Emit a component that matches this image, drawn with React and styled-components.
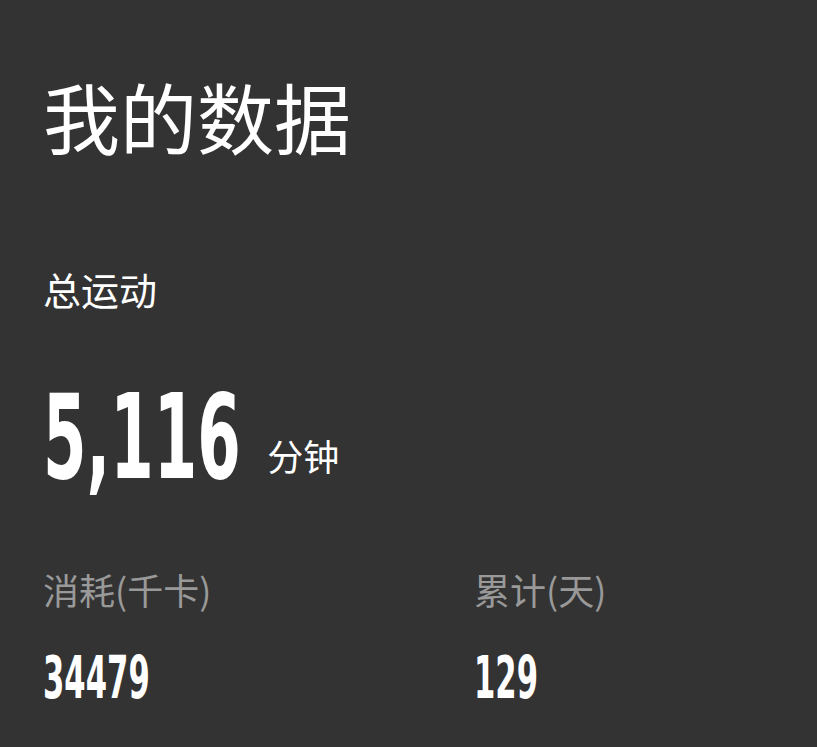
import styled, { createGlobalStyle } from "styled-components";

const GlobalStyle = createGlobalStyle`
    html, body {
        margin: 0;
        padding: 0;
        background: #333333;
    }
    body {
        font-family: "Noto Sans CJK SC", "Noto Sans", sans-serif;
        color: #ffffff;
    }
`;

const Page = styled.div`
    width: 817px;
    height: 747px;
    box-sizing: border-box;
    padding: 77px 44px 0 43px;
    display: flex;
    flex-direction: column;
    background: #333333;
    overflow: hidden;
`;

const Title = styled.h1`
    margin: 0;
    font-size: 77px;
    font-weight: 400;
    line-height: 1;
`;

const Label = styled.div`
    margin-top: ${(p) => p.$top || 0}px;
    font-size: ${(p) => p.$size || 36}px;
    line-height: 1;
    color: ${(p) => p.$color || "#ffffff"};
`;

const BigRow = styled.div`
    display: flex;
    align-items: baseline;
    margin-top: 70px;
`;

// no condensed face installed, so squeeze the bold digits horizontally
const Digits = styled.span`
    display: inline-block;
    font-family: "DejaVu Sans", sans-serif;
    font-weight: 700;
    font-size: ${(p) => p.$size}px;
    line-height: 1;
    transform: scaleX(${(p) => p.$scale || 0.52});
    transform-origin: left center;
    margin-right: ${(p) => p.$pull || 0}px;
`;

const Unit = styled.span`
    position: relative;
    top: -7px;
    font-size: 36px;
    line-height: 1;
`;

const Stats = styled.div`
    display: grid;
    grid-template-columns: 431px 1fr;
    margin-top: 75px;
`;

const Stat = styled.div`
    display: flex;
    flex-direction: column;
    align-items: flex-start;
`;

const StatValue = styled(Digits)`
    margin-top: 41px;
`;

function StatBlock({ label, value }) {
    return (
        <Stat>
            <Label $size={36} $color="#999999">{label}</Label>
            <StatValue $size={59} $scale={0.52}>{value}</StatValue>
        </Stat>
    );
}

export default function App() {
    return (
        <>
            <GlobalStyle />
            <Page>
                <Title>我的数据</Title>
                <Label $top={116} $size={38}>总运动</Label>
                <BigRow>
                    <Digits $size={118} $scale={0.53} $pull={-149}>5,116</Digits>
                    <Unit>分钟</Unit>
                </BigRow>
                <Stats>
                    <StatBlock label="消耗(千卡)" value="34479" />
                    <StatBlock label="累计(天)" value="129" />
                </Stats>
            </Page>
        </>
    );
}
